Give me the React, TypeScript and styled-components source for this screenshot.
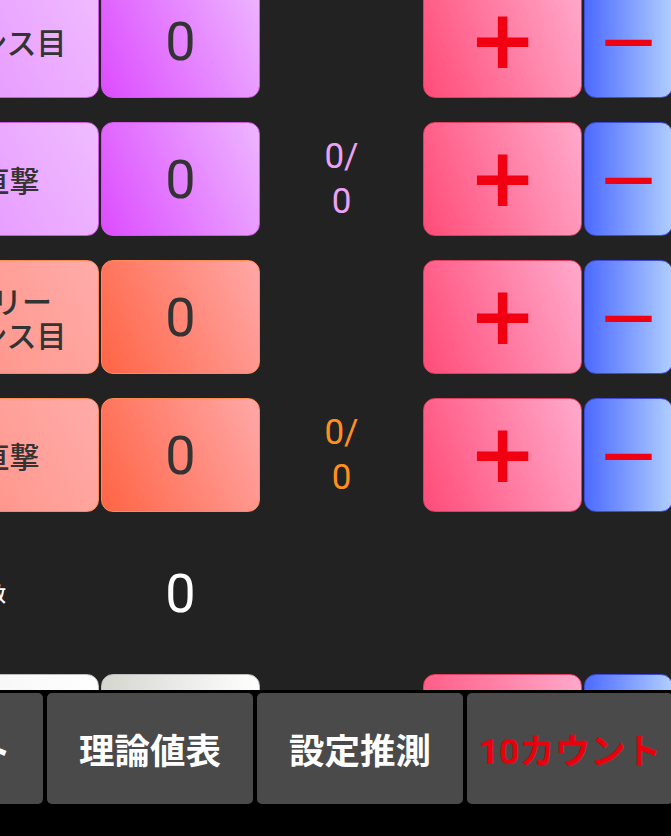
import styled, { createGlobalStyle } from "styled-components";

const GlobalStyle = createGlobalStyle`
  html, body {
    margin: 0;
    padding: 0;
    height: 100%;
    background: #222;
    overflow: hidden;
  }
  #root {
    height: 100%;
  }
`;

type Tone = "purple" | "salmon" | "white" | "plain";

const tones: Record<Tone, { label: string; value: string; border: string; text: string }> = {
  purple: {
    label: "linear-gradient(60deg, #e28aff 0%, #f0bcff 100%)",
    value: "linear-gradient(65deg, #dc4cff 0%, #eeb6ff 100%)",
    border: "#cc58e4",
    text: "#333",
  },
  salmon: {
    label: "linear-gradient(60deg, #ff8a7a 0%, #ffacaa 100%)",
    value: "linear-gradient(65deg, #ff6444 0%, #ffa8a8 100%)",
    border: "#ff8a56",
    text: "#333",
  },
  white: {
    label: "linear-gradient(60deg, #ececec 0%, #ffffff 100%)",
    value: "linear-gradient(to right, #d6d6d0 0%, #ffffff 100%)",
    border: "#bdbdbd",
    text: "#333",
  },
  plain: {
    label: "transparent",
    value: "transparent",
    border: "transparent",
    text: "#fff",
  },
};

const Page = styled.div`
  height: 100%;
  overflow: hidden;
  background: #222;
  font-family: Roboto, "Noto Sans CJK JP", sans-serif;
`;

// the counter list is scrolled a little to the right and down
const Rows = styled.div`
  display: flex;
  flex-direction: column;
  gap: 24px;
  margin: -16px 0 0 -115px;
  width: 788px;
`;

const Row = styled.div`
  display: grid;
  grid-template-columns: 214px 159px 159px 159px 89px;
  column-gap: 2px;
  height: 114px;
`;

const Cell = styled.div<{ $tone: Tone }>`
  display: flex;
  align-items: center;
  justify-content: center;
  box-sizing: border-box;
  border-radius: 12px;
  border: 1.5px solid ${(p) => tones[p.$tone].border};
  color: ${(p) => tones[p.$tone].text};
`;

const Label = styled(Cell)<{ $small?: boolean }>`
  background: ${(p) => tones[p.$tone].label};
  font-family: "Noto Sans CJK JP", sans-serif;
  font-size: ${(p) => (p.$small ? "20px" : "30px")};
  font-weight: 500;
  line-height: 1.15;
  text-align: center;
  padding-right: ${(p) => (p.$small ? "92px" : "0")};
  justify-content: ${(p) => (p.$small ? "flex-end" : "center")};
`;

const Value = styled(Cell)`
  background: ${(p) => tones[p.$tone].value};
  font-size: 54px;
  font-weight: 400;
`;

const Ratio = styled.div<{ $color: string }>`
  display: flex;
  flex-direction: column;
  align-items: center;
  justify-content: center;
  color: ${(p) => p.$color};
  font-size: 35px;
  line-height: 45px;
`;

const Button = styled.div<{ $kind: "plus" | "minus" }>`
  display: flex;
  align-items: center;
  justify-content: center;
  box-sizing: border-box;
  border-radius: 12px;
  background: ${(p) =>
    p.$kind === "plus"
      ? "linear-gradient(70deg, #ff4c78 0%, #ffaacc 100%)"
      : "linear-gradient(to right, #4c6aff 0%, #b0ceff 100%)"};
  border: 1.5px solid ${(p) => (p.$kind === "plus" ? "#e0405e" : "#3c4cd8")};
  color: #f00010;
  font-family: "DejaVu Sans", sans-serif;
  font-weight: ${(p) => (p.$kind === "plus" ? 700 : 400)};
  font-size: ${(p) => (p.$kind === "plus" ? "82px" : "74px")};
  line-height: 1;
  padding-bottom: 2px;
`;

const TabBar = styled.nav`
  position: fixed;
  left: 0;
  right: 0;
  bottom: 0;
  height: 146px;
  box-sizing: border-box;
  padding-top: 3px;
  background: #000;
  overflow: hidden;
  z-index: 2;
`;

const Tabs = styled.div`
  display: grid;
  grid-template-columns: repeat(4, 206px);
  column-gap: 4px;
  margin-left: -163px;
  height: 111px;
`;

const Tab = styled.div<{ $active?: boolean }>`
  display: flex;
  align-items: center;
  justify-content: center;
  border-radius: 5px;
  background: #4a4a4a;
  color: ${(p) => (p.$active ? "#e8000c" : "#fff")};
  font-family: Roboto, "Noto Sans CJK JP", sans-serif;
  font-size: 35.5px;
  font-weight: 700;
  white-space: nowrap;
`;

type Counter = {
  label: string[];
  tone: Tone;
  ratio?: string;
  buttons: boolean;
  small?: boolean;
  hidden?: boolean;
};

const counters: Counter[] = [
  { label: ["チャンス目"], tone: "purple", buttons: true },
  { label: ["AT直撃"], tone: "purple", ratio: "#eca2f2", buttons: true },
  { label: ["チェリー", "チャンス目"], tone: "salmon", buttons: true },
  { label: ["AT直撃"], tone: "salmon", ratio: "#ff9020", buttons: true },
  { label: ["総回転数"], tone: "plain", buttons: false, small: true },
  // last row sits under the tab bar, only its top edge shows
  { label: [], tone: "white", buttons: true, hidden: true },
];

export default function App() {
  return (
    <Page>
      <GlobalStyle />
      <Rows>
        {counters.map((c, i) => (
          <Row key={i}>
            <Label $tone={c.tone} $small={c.small}>
              <span>
                {c.label.map((line, j) => (
                  <div key={j}>{line}</div>
                ))}
              </span>
            </Label>
            <Value $tone={c.tone}>{c.hidden ? null : "0"}</Value>
            <Ratio $color={c.ratio ?? "transparent"}>
              {c.ratio && (
                <>
                  <span>0/</span>
                  <span>0</span>
                </>
              )}
            </Ratio>
            {c.buttons ? <Button $kind="plus">{c.hidden ? null : "+"}</Button> : <div />}
            {c.buttons ? <Button $kind="minus">{c.hidden ? null : "−"}</Button> : <div />}
          </Row>
        ))}
      </Rows>
      <TabBar>
        <Tabs>
          <Tab>リセット</Tab>
          <Tab>理論値表</Tab>
          <Tab>設定推測</Tab>
          <Tab $active>10カウント</Tab>
        </Tabs>
      </TabBar>
    </Page>
  );
}
